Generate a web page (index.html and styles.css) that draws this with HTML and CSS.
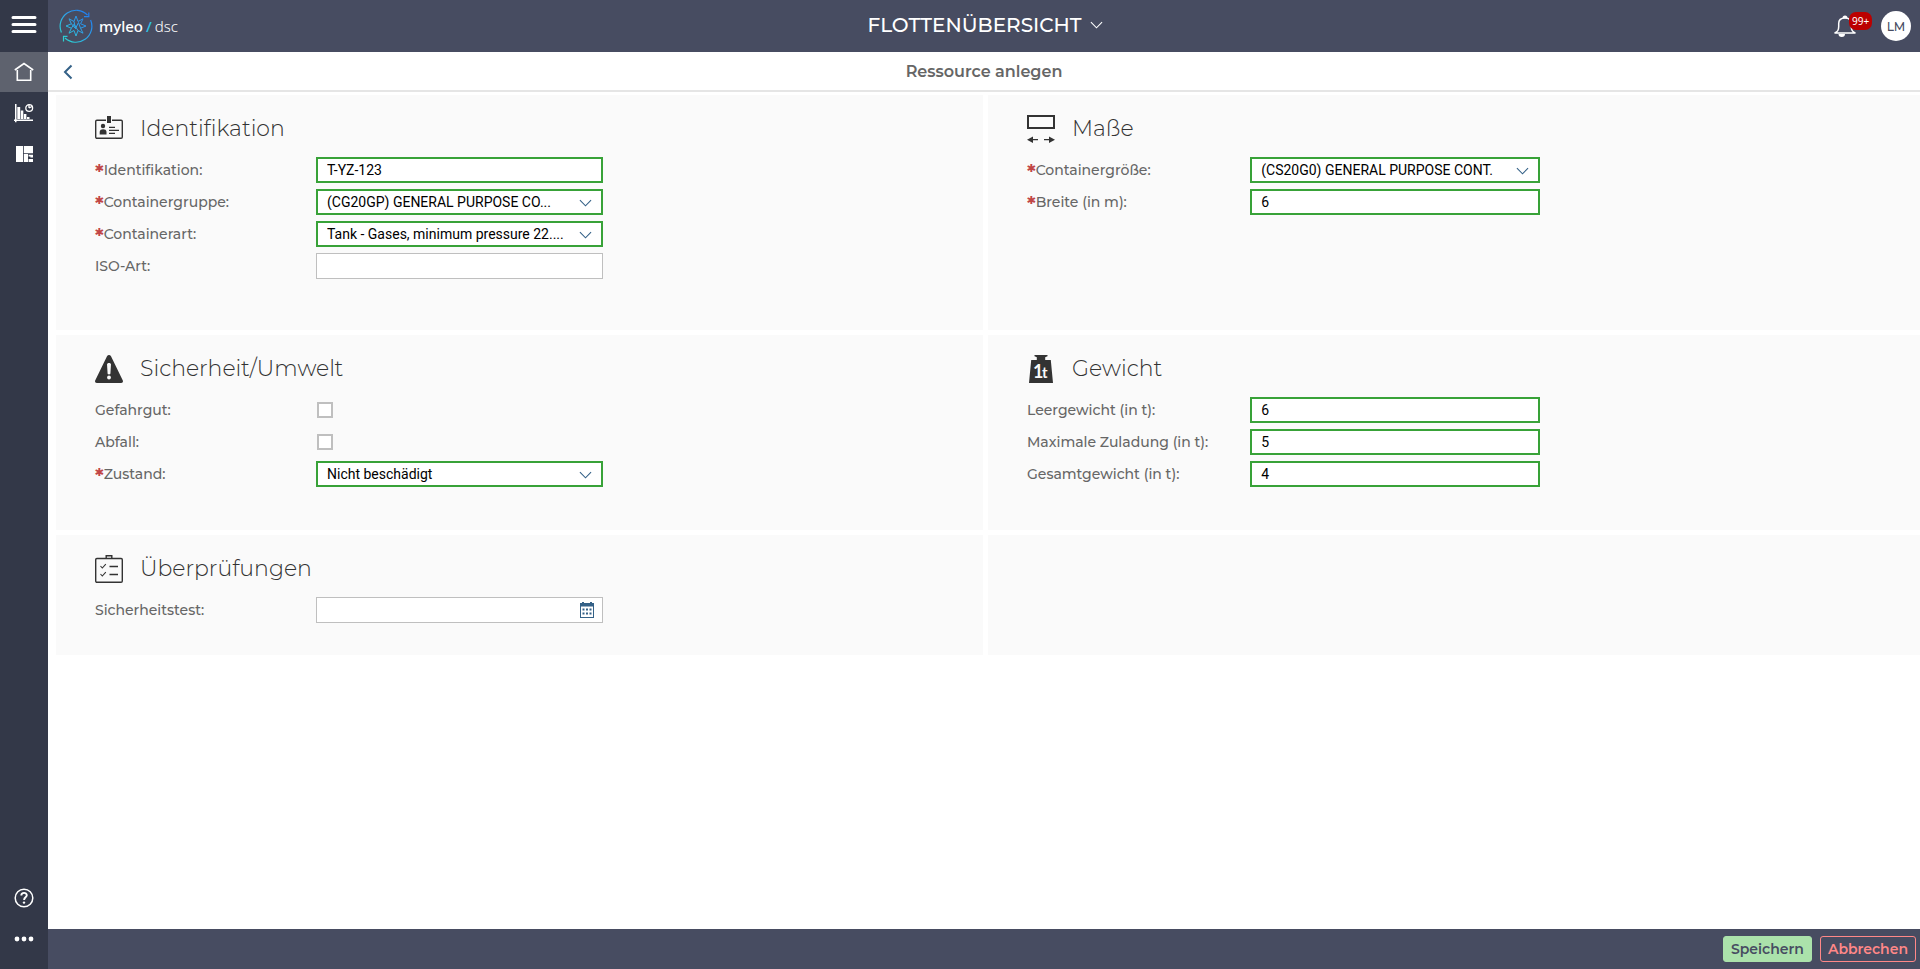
FILE: index.html
```html
<!DOCTYPE html>
<html lang="de">
<head>
<meta charset="utf-8">
<title>Flottenübersicht – Ressource anlegen</title>
<link rel="stylesheet" href="styles.css">
</head>
<body>
<div class="app">
  <nav class="sidebar" aria-label="Hauptnavigation">
    <button class="burger" type="button" aria-label="Menü">
      <svg width="26" height="20" viewBox="0 0 26 20" stroke="#fff" stroke-width="3" stroke-linecap="round"><path d="M2 3.500h22M2 10.500h22M2 17.500h22"/></svg>
    </button>
    <a class="nav-item nav-item-active" href="#" aria-label="Start">
      <svg width="20" height="20" viewBox="0 0 20 20" fill="none" stroke="#fff" stroke-width="1.600"><path d="M.8 8 10 1.500 19.200 8M3.300 8v10.300h13.400V8"/></svg>
    </a>
    <a class="nav-item" href="#" aria-label="Berichte">
      <svg width="20" height="20" viewBox="0 0 20 20"><path fill="#fff" d="M1 1h1.500v15.500H19V18H2.500v1.200H1V18H0v-1.500h1zM3.300 4h2.900v12H3.300zM6.800 7.500h2.500V16H6.800zM9.900 11h2.500v5H9.900zM13 14h2.500v2H13z"/><circle cx="15.200" cy="5" r="3.400" fill="none" stroke="#fff" stroke-width="1.300"/><path d="M15 5V1.600M15 5l3-1.500" stroke="#fff" stroke-width="1.300"/></svg>
    </a>
    <a class="nav-item" href="#" aria-label="Dashboard">
      <svg width="20" height="20" viewBox="0 0 20 20" fill="#fff"><path d="M2 2h7v16H2zM9.800 2H19v7.200H9.800zM9.800 10h4.200v8H9.800zM14.600 10.800H19v2.600h-2.600v-1h-1.800zM14.600 15H19v3h-4.400z"/></svg>
    </a>
    <div class="sidebar-spacer"></div>
    <a class="nav-item" href="#" aria-label="Hilfe">
      <svg width="20" height="20" viewBox="0 0 20 20" fill="none" stroke="#fff"><circle cx="10" cy="10" r="8.800" stroke-width="1.500"/><path d="M7.300 7.600c0-3.600 5.500-3.600 5.500-.3 0 2-2.700 2.100-2.700 4.600" stroke-width="1.900"/><circle cx="10" cy="14.600" r="1.200" fill="#fff" stroke="none"/></svg>
    </a>
    <a class="nav-item" href="#" aria-label="Mehr">
      <svg width="20" height="20" viewBox="0 0 20 20" fill="#fff"><circle cx="3" cy="10" r="2.400"/><circle cx="10" cy="10" r="2.400"/><circle cx="17" cy="10" r="2.400"/></svg>
    </a>
  </nav>

  <div class="page">
    <header class="header">
      <a class="brand" href="#" aria-label="myleo dsc">
        <svg width="34" height="34" viewBox="0 0 34 34" fill="none" stroke="url(#brand-gradient)">
          <defs><linearGradient id="brand-gradient" gradientUnits="userSpaceOnUse" x1="4" y1="30" x2="30" y2="4"><stop offset="0" stop-color="#2bd4d0"/><stop offset=".5" stop-color="#2fa3e6"/><stop offset="1" stop-color="#1f7cf2"/></linearGradient></defs>
          <path stroke-width="1.200" d="M2.400 23.500A16 16 0 0 1 28.500 6M31.600 11A16 16 0 0 1 6 29M29.800 3.500V7.600H25M4.500 32.500V27.300H8.500"/>
          <path stroke-width="1" d="M17 7l2 5.500 5-2.700-2.400 5L27 17l-5.400 2.200 2.400 5-5-2.700L17 27l-2-5.500-5 2.700 2.400-5L7 17l5.400-2.200-2.400-5 5 2.700zM15 12.500l1.500 7 3-6 2 5.700M12.400 14.800l4.100 4.700M12.400 19.200l2.600-4 4 6.300"/>
        </svg>
        <span class="brand-name">myleo<span class="brand-slash">/</span><span class="brand-unit">dsc</span></span>
      </a>
      <button class="app-title" type="button">FLOTTENÜBERSICHT
        <svg width="13" height="8" viewBox="0 0 14 8" fill="none" stroke="#fff" stroke-width="1.200"><path d="M1 1l6 6 6-6"/></svg>
      </button>
      <div class="header-tools">
        <button class="bell" type="button" aria-label="Benachrichtigungen">
          <svg width="24" height="24" viewBox="0 0 24 24" fill="none" stroke="#fff" stroke-width="1.500"><path d="M1.500 19c3-.7 4.200-3 4.200-6.500V9.500C5.700 5.800 8 4 12 4s6.300 1.800 6.300 5.500v3c0 3.500 1.200 5.800 4.200 6.500z"/><path fill="#fff" stroke="none" d="M9.500 4.200a2.500 2.700 0 0 1 5 0zM5.500 20h6.500a3.200 2.900 0 0 1-6.500 0z"/></svg>
          <span class="badge">99+</span>
        </button>
        <button class="avatar" type="button">LM</button>
      </div>
    </header>

    <div class="subheader">
      <button class="back" type="button" aria-label="Zurück">
        <svg width="10" height="16" viewBox="0 0 10 16" fill="none" stroke="#346187" stroke-width="2"><path d="M8.500 1.500 2 8l6.500 6.500"/></svg>
      </button>
      <h1 class="page-title">Ressource anlegen</h1>
    </div>

    <main class="content">
      <form class="sections" id="resource">
        <section class="section section-left section-tall">
          <h2 class="section-title">
            <svg width="28" height="28" viewBox="0 0 28 28"><rect x=".7" y="5.200" width="26.600" height="18.100" rx="1.200" fill="none" stroke="#333" stroke-width="1.400"/><path fill="#fafafa" d="M11 4h6v3h-6z"/><path fill="#333" d="M12 1h4v7h-4z"/><circle cx="8" cy="11" r="2.200" fill="#333"/><path fill="#333" d="M4.700 19.500v-2.700c0-3.300 6.800-3.300 6.800 0v2.700z"/><path d="M14 12.300h6M14 15.300h10M14 18.300h6" stroke="#333" stroke-width="1.300"/></svg>
            Identifikation
          </h2>
          <div class="row"><label class="label required" for="ident">Identifikation:</label><input class="field valid" id="ident" type="text" value="T-YZ-123"></div>
          <div class="row"><label class="label required" for="group">Containergruppe:</label><div class="control"><select class="field valid" id="group"><option>(CG20GP) GENERAL PURPOSE CO...</option></select><svg class="chevron" viewBox="0 0 14 8"><path d="M1 1l6 6 6-6"/></svg></div></div>
          <div class="row"><label class="label required" for="kind">Containerart:</label><div class="control"><select class="field valid" id="kind"><option>Tank - Gases, minimum pressure 22....</option></select><svg class="chevron" viewBox="0 0 14 8"><path d="M1 1l6 6 6-6"/></svg></div></div>
          <div class="row"><label class="label" for="iso">ISO-Art:</label><input class="field" id="iso" type="text"></div>
        </section>

        <section class="section section-tall">
          <h2 class="section-title">
            <svg width="28" height="28" viewBox="0 0 28 28"><rect x="1" y="1" width="26" height="12" fill="none" stroke="#333" stroke-width="2"/><path d="M4 24.700h7M17 24.700h7" stroke="#333" stroke-width="1.300"/><path fill="#333" d="M0 24.700l6-3.300v6.600zM28 24.700l-6-3.300v6.600z"/></svg>
            Maße
          </h2>
          <div class="row"><label class="label required" for="size">Containergröße:</label><div class="control"><select class="field valid" id="size"><option>(CS20G0) GENERAL PURPOSE CONT.</option></select><svg class="chevron" viewBox="0 0 14 8"><path d="M1 1l6 6 6-6"/></svg></div></div>
          <div class="row"><label class="label required" for="width">Breite (in m):</label><input class="field valid" id="width" type="text" value="6"></div>
        </section>

        <section class="section section-left section-medium">
          <h2 class="section-title">
            <svg width="28" height="28" viewBox="0 0 28 28"><path fill="#333" d="M12 1.200c.9-1.600 3.100-1.600 4 0l11.700 24.100c.7 1.400 0 2.700-1.500 2.700H1.800C.3 28-.4 26.700.3 25.300z"/><path fill="#fafafa" d="M12 9.500c0-2 4-2 4 0l-.6 9c-.1 1.200-2.700 1.200-2.800 0z"/><circle cx="14" cy="22.500" r="1.900" fill="#fafafa"/></svg>
            Sicherheit/Umwelt
          </h2>
          <div class="row"><label class="label" for="danger">Gefahrgut:</label><input class="check" id="danger" type="checkbox"></div>
          <div class="row"><label class="label" for="waste">Abfall:</label><input class="check" id="waste" type="checkbox"></div>
          <div class="row"><label class="label required" for="state">Zustand:</label><div class="control"><select class="field valid" id="state"><option>Nicht beschädigt</option></select><svg class="chevron" viewBox="0 0 14 8"><path d="M1 1l6 6 6-6"/></svg></div></div>
        </section>

        <section class="section section-medium">
          <h2 class="section-title">
            <svg width="28" height="28" viewBox="0 0 28 28"><path fill="#333" d="M7.500 0h13v1.200l-2.300 1V5h5.600L26 28H2L4.200 5h5.600V2.200l-2.300-1z"/><text class="weight-one" x="6" y="23">1</text><text class="weight-unit" x="15" y="23">t</text></svg>
            Gewicht
          </h2>
          <div class="row"><label class="label" for="empty">Leergewicht (in t):</label><input class="field valid" id="empty" type="text" value="6"></div>
          <div class="row"><label class="label" for="load">Maximale Zuladung (in t):</label><input class="field valid" id="load" type="text" value="5"></div>
          <div class="row"><label class="label" for="total">Gesamtgewicht (in t):</label><input class="field valid" id="total" type="text" value="4"></div>
        </section>

        <section class="section section-left section-short">
          <h2 class="section-title">
            <svg width="28" height="28" viewBox="0 0 28 28" fill="none" stroke="#333" stroke-width="1.400"><rect x=".7" y="3.500" width="26.600" height="23.800" rx="1.200"/><path d="M11.200 3.500V.7h5.600v2.800M14.500 11.500h8.500M14.500 19.500h8.500"/><path stroke-width="1.100" d="M5.500 11l1.800 2 3.500-3.800M5.500 19l1.800 2 3.500-3.800"/></svg>
            Überprüfungen
          </h2>
          <div class="row"><label class="label" for="test">Sicherheitstest:</label><div class="control"><input class="field" id="test" type="text"><button class="calendar" type="button" aria-label="Datum wählen"><svg width="14" height="16" viewBox="0 0 14 16"><path fill="#346187" d="M0 1h2V0h2v1h6V0h2v1h2v15H0zM1 4.500V15h12V4.500z"/><path fill="#346187" d="M2.500 6.500h2v2h-2zM6 6.500h2v2H6zM9.500 6.500h2v2h-2zM2.500 10.500h2v2h-2zM6 10.500h2v2H6zM9.500 10.500h2v2h-2z"/></svg></button></div></div>
        </section>

        <section class="section section-short"></section>
      </form>
    </main>

    <footer class="footer">
      <button class="btn btn-save" type="submit" form="resource">Speichern</button>
      <button class="btn btn-cancel" type="button">Abbrechen</button>
    </footer>
  </div>
</div>
</body>
</html>
```

FILE: styles.css
```css
* { box-sizing: border-box; }

body {
  margin: 0;
  font-family: Montserrat, Inter, sans-serif;
  color: #666;
  background: #fff;
}

button {
  font-family: inherit;
  border: 0;
  padding: 0;
  background: none;
  cursor: pointer;
}

svg { display: block; flex: none; }

.app { display: flex; min-height: 100vh; }

/* Sidebar */
.sidebar {
  display: flex;
  flex-direction: column;
  flex: none;
  gap: 1px;
  width: 48px;
  padding-bottom: 10px;
  background: #333848;
}
.burger {
  display: flex;
  align-items: center;
  justify-content: center;
  height: 51px;
  padding-right: 1px;
  padding-bottom: 3px;
}
.nav-item {
  display: flex;
  align-items: center;
  justify-content: center;
  height: 40px;
}
.nav-item-active { background: #5e626e; }
.sidebar-spacer { flex: 1; }

/* Header */
.page { display: flex; flex-direction: column; flex: 1; min-width: 0; }
.header {
  display: grid;
  grid-template-columns: 1fr auto 1fr;
  align-items: center;
  height: 52px;
  padding: 0 9px 0 11px;
  background: #474c61;
  color: #fff;
}
.brand {
  display: flex;
  align-items: center;
  gap: 6px;
  padding-bottom: 1px;
  color: #fff;
  text-decoration: none;
}
.brand-name { font: 500 15px "Noto Sans", sans-serif; }
.brand-slash { margin: 0 3px; color: #2fc4e6; }
.brand-unit { font-weight: 300; }
.app-title {
  display: flex;
  align-items: center;
  gap: 8px;
  padding-bottom: 2px;
  font-size: 20px;
  font-weight: 500;
  color: #fff;
}
.header-tools {
  display: flex;
  align-items: center;
  justify-content: flex-end;
  gap: 24px;
}
.bell { position: relative; }
.badge {
  position: absolute;
  top: -2px;
  left: 16px;
  padding: 0 3px;
  border-radius: 7px;
  background: #b00;
  color: #fff;
  font: 10px/18px "Noto Sans", sans-serif;
}
.avatar {
  width: 30px;
  height: 30px;
  border-radius: 50%;
  background: #fff;
  color: #474c61;
  font-size: 12px;
  font-weight: 500;
}

.subheader {
  display: grid;
  grid-template-columns: 48px 1fr 48px;
  align-items: center;
  height: 40px;
  padding-top: 2px;
  border-bottom: 2px solid #e5e5e5;
}
.back { display: flex; padding-left: 15px; }
.page-title {
  margin: 0;
  font-size: 16px;
  font-weight: 600;
  line-height: 24px;
  text-align: center;
}

/* Form */
.content { flex: 1; padding: 3px 0 0 8px; }
.sections {
  display: grid;
  grid-template-columns: 1fr 1fr;
  row-gap: 5px;
}
.section { padding: 20px 0 0 39px; background: #fafafa; }
.section-left { margin-right: 5px; padding-right: 4px; }
.section-tall { min-height: 235px; }
.section-medium { min-height: 195px; }
.section-short { min-height: 120px; }
.section-title {
  display: flex;
  align-items: center;
  gap: 17px;
  margin: 0 0 14px;
  font-size: 22px;
  font-weight: 300;
  line-height: 28px;
  color: #333;
}
.weight-one { font: 700 18px Lato, sans-serif; fill: #fafafa; }
.weight-unit { font: 700 15px Lato, sans-serif; fill: #fafafa; }
.row {
  display: grid;
  grid-template-columns: 3fr 4fr 5fr;
  align-items: center;
  height: 26px;
  margin-bottom: 6px;
}
.label {
  font-size: 14px;
  font-weight: 500;
  line-height: 24px;
  white-space: nowrap;
}
.required::before {
  content: "*";
  color: #c14646;
  font-size: 20px;
  font-weight: 700;
  line-height: 1px;
  vertical-align: -4px;
}
.control { position: relative; }
.field {
  display: block;
  width: calc(100% - 8px);
  height: 26px;
  padding: 0 10px;
  border: 1px solid #bfbfbf;
  border-radius: 0;
  background: #fff;
  color: #000;
  font: 14px Roboto, sans-serif;
  appearance: none;
}
.valid { border: 2px solid #38a238; padding: 0 9px; }
.chevron {
  position: absolute;
  top: 10px;
  right: 19px;
  width: 13px;
  height: 8px;
  fill: none;
  stroke: #346187;
  stroke-width: 1.2;
  pointer-events: none;
}
.calendar { position: absolute; top: 5px; right: 17px; }
.check {
  width: 16px;
  height: 16px;
  margin: 0 0 0 1px;
  border: 2px solid #bfbfbf;
  background: #fff;
  appearance: none;
}

/* Footer */
.footer {
  display: flex;
  align-items: center;
  justify-content: flex-end;
  gap: 8px;
  height: 40px;
  padding: 0 4px;
  background: #474c61;
}
.btn {
  height: 26px;
  padding: 0 7px;
  border: 1px solid;
  border-radius: 3px;
  font-size: 14px;
  font-weight: 600;
}
.btn-save { border-color: #abe2ab; background: #abe2ab; color: #474c61; }
.btn-cancel { border-color: #ff8888; color: #ff8888; }
```
